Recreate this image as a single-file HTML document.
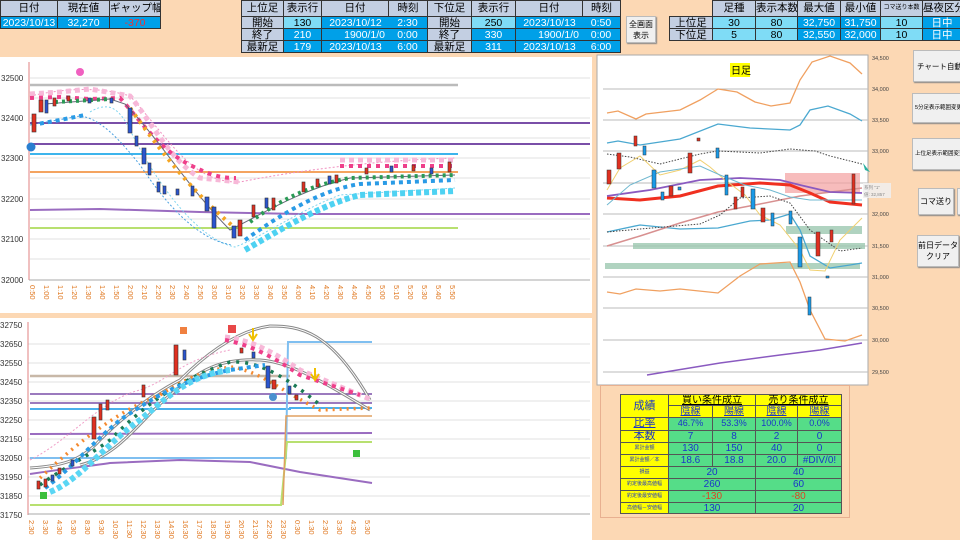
<!DOCTYPE html>
<html><head><meta charset="utf-8"><style>
*{margin:0;padding:0;box-sizing:border-box}
body{width:960px;height:540px;background:#fcd8b4;position:relative;overflow:hidden;font-family:"Liberation Sans","Noto Sans CJK JP",sans-serif;}
.c{position:absolute;font-size:10.5px;text-align:center;line-height:12px;border:1px solid #333;white-space:nowrap;overflow:hidden}
.h{background:#c3cfe2;color:#000}
.b{background:#00a0e8;color:#fff}
.l{background:#7fdcf6;color:#000}
.btn{position:absolute;background:#f0f0f0;border:1px solid #bbb;box-shadow:1px 1px 1px #888;font-size:8px;display:flex;align-items:center;justify-content:center;text-align:center;line-height:13px;white-space:nowrap;overflow:hidden}
.t{position:absolute;font-size:10px;text-align:center;border:1px solid #555;line-height:11px;white-space:nowrap;overflow:hidden}
.y{background:#ffff00;color:#1a35c8}
.g{background:#55dd88;color:#1a35c8}
svg text{font-family:"Liberation Sans",sans-serif}
</style></head><body>
<div class="c h" style="left:0;top:0;width:58px;height:17px;line-height:15px">日付</div>
<div class="c h" style="left:57px;top:0;width:53px;height:17px;line-height:15px">現在値</div>
<div class="c h" style="left:109px;top:0;width:52px;height:17px;line-height:15px">ギャップ幅</div>
<div class="c b" style="left:0;top:16px;width:58px;height:13px">2023/10/13</div>
<div class="c b" style="left:57px;top:16px;width:53px;height:13px">32,270</div>
<div class="c b" style="left:109px;top:16px;width:52px;height:13px;color:#e33">-370</div>
<div class="c h" style="left:241px;top:0;width:43px;height:17px;line-height:15px">上位足</div>
<div class="c h" style="left:283px;top:0;width:39px;height:17px;line-height:15px">表示行</div>
<div class="c h" style="left:321px;top:0;width:68px;height:17px;line-height:15px">日付</div>
<div class="c h" style="left:388px;top:0;width:40px;height:17px;line-height:15px">時刻</div>
<div class="c h" style="left:427px;top:0;width:45px;height:17px;line-height:15px">下位足</div>
<div class="c h" style="left:471px;top:0;width:45px;height:17px;line-height:15px">表示行</div>
<div class="c h" style="left:515px;top:0;width:68px;height:17px;line-height:15px">日付</div>
<div class="c h" style="left:582px;top:0;width:39px;height:17px;line-height:15px">時刻</div>
<div class="c h" style="left:241px;top:16px;width:43px;height:13px">開始</div>
<div class="c l" style="left:283px;top:16px;width:39px;height:13px">130</div>
<div class="c b" style="left:321px;top:16px;width:68px;height:13px;border-right:0">2023/10/12</div>
<div class="c b" style="left:388px;top:16px;width:40px;height:13px;border-left:0">2:30</div>
<div class="c h" style="left:427px;top:16px;width:45px;height:13px">開始</div>
<div class="c l" style="left:471px;top:16px;width:45px;height:13px">250</div>
<div class="c b" style="left:515px;top:16px;width:68px;height:13px;border-right:0">2023/10/13</div>
<div class="c b" style="left:582px;top:16px;width:39px;height:13px;border-left:0">0:50</div>
<div class="c h" style="left:241px;top:28px;width:43px;height:13px">終了</div>
<div class="c b" style="left:283px;top:28px;width:39px;height:13px">210</div>
<div class="c b" style="left:321px;top:28px;width:68px;height:13px;border-right:0;text-align:right;padding-right:4px">1900/1/0</div>
<div class="c b" style="left:388px;top:28px;width:40px;height:13px;border-left:0">0:00</div>
<div class="c h" style="left:427px;top:28px;width:45px;height:13px">終了</div>
<div class="c b" style="left:471px;top:28px;width:45px;height:13px">330</div>
<div class="c b" style="left:515px;top:28px;width:68px;height:13px;border-right:0;text-align:right;padding-right:4px">1900/1/0</div>
<div class="c b" style="left:582px;top:28px;width:39px;height:13px;border-left:0">0:00</div>
<div class="c h" style="left:241px;top:40px;width:43px;height:13px">最新足</div>
<div class="c b" style="left:283px;top:40px;width:39px;height:13px">179</div>
<div class="c b" style="left:321px;top:40px;width:68px;height:13px;border-right:0">2023/10/13</div>
<div class="c b" style="left:388px;top:40px;width:40px;height:13px;border-left:0">6:00</div>
<div class="c h" style="left:427px;top:40px;width:45px;height:13px">最新足</div>
<div class="c b" style="left:471px;top:40px;width:45px;height:13px">311</div>
<div class="c b" style="left:515px;top:40px;width:68px;height:13px;border-right:0">2023/10/13</div>
<div class="c b" style="left:582px;top:40px;width:39px;height:13px;border-left:0">6:00</div>
<div class="btn" style="left:626px;top:16px;width:30px;height:27px;font-size:8px;line-height:11px;white-space:normal">全画面<br>表示</div>
<div class="c h" style="left:712px;top:0;width:44px;height:17px;line-height:15px">足種</div>
<div class="c h" style="left:755px;top:0;width:43px;height:17px;line-height:15px">表示本数</div>
<div class="c h" style="left:797px;top:0;width:44px;height:17px;line-height:15px">最大値</div>
<div class="c h" style="left:840px;top:0;width:41px;height:17px;line-height:15px">最小値</div>
<div class="c h" style="left:880px;top:0;width:43px;height:17px;line-height:15px;font-size:6px">コマ送り本数</div>
<div class="c h" style="left:922px;top:0;width:40px;height:17px;line-height:15px">昼夜区分</div>
<div class="c h" style="left:669px;top:16px;width:44px;height:13px">上位足</div>
<div class="c h" style="left:669px;top:28px;width:44px;height:13px">下位足</div>
<div class="c l" style="left:712px;top:16px;width:44px;height:13px">30</div>
<div class="c l" style="left:712px;top:28px;width:44px;height:13px">5</div>
<div class="c l" style="left:755px;top:16px;width:43px;height:13px">80</div>
<div class="c l" style="left:755px;top:28px;width:43px;height:13px">80</div>
<div class="c b" style="left:797px;top:16px;width:44px;height:13px">32,750</div>
<div class="c b" style="left:797px;top:28px;width:44px;height:13px">32,550</div>
<div class="c b" style="left:840px;top:16px;width:41px;height:13px">31,750</div>
<div class="c b" style="left:840px;top:28px;width:41px;height:13px">32,000</div>
<div class="c l" style="left:880px;top:16px;width:43px;height:13px">10</div>
<div class="c l" style="left:880px;top:28px;width:43px;height:13px">10</div>
<div class="c b" style="left:922px;top:16px;width:40px;height:13px">日中</div>
<div class="c b" style="left:922px;top:28px;width:40px;height:13px">日中</div>

<svg style="position:absolute;left:0;top:56px" width="592" height="484" viewBox="0 56 592 484">
<rect x="0" y="57" width="592" height="256" fill="#fff"/>
<rect x="0" y="318" width="592" height="222" fill="#fff"/>
<g stroke="#e2e2e2" stroke-width="1">
<line x1="30" y1="98" x2="590" y2="98"/><line x1="30" y1="138" x2="590" y2="138"/><line x1="30" y1="178" x2="590" y2="178"/><line x1="30" y1="219" x2="590" y2="219"/><line x1="30" y1="259" x2="590" y2="259"/>
<line x1="30" y1="78" x2="590" y2="78"/><line x1="30" y1="118" x2="590" y2="118"/><line x1="30" y1="158" x2="590" y2="158"/><line x1="30" y1="199" x2="590" y2="199"/><line x1="30" y1="239" x2="590" y2="239"/>
</g>
<line x1="29" y1="62" x2="29" y2="280" stroke="#e08080"/>
<line x1="29" y1="280" x2="590" y2="280" stroke="#aaa"/>
<g font-size="8" fill="#333"><text x="1" y="81">32500</text><text x="1" y="121">32400</text><text x="1" y="161">32300</text><text x="1" y="202">32200</text><text x="1" y="242">32100</text><text x="1" y="283">32000</text></g>
<line x1="30" y1="85" x2="458" y2="85" stroke="#bbb" stroke-width="2.5"/>
<line x1="30" y1="123" x2="590" y2="123" stroke="#7a4fa8" stroke-width="2"/>
<line x1="30" y1="144" x2="590" y2="144" stroke="#7a4fa8" stroke-width="2"/>
<line x1="30" y1="154" x2="458" y2="154" stroke="#3cb4ec" stroke-width="2"/>
<line x1="30" y1="172" x2="458" y2="172" stroke="#f4a460" stroke-width="2"/>
<path d="M30 210 L100 209 L200 212 L300 214 L590 214" stroke="#9a6cc0" stroke-width="2" fill="none"/>
<line x1="30" y1="228" x2="458" y2="228" stroke="#b8e070" stroke-width="2"/>
<path d="M30 96 C80 85 110 90 130 96 C170 140 190 180 235 182 L240 182 C300 170 380 160 455 158" stroke="#f090c0" stroke-dasharray="2 2" fill="none"/>
<path d="M90 112 C110 100 120 110 130 130 C160 190 200 240 235 247 C260 238 300 210 340 195 L455 188" stroke="#7fd4ee" stroke-dasharray="2 2" fill="none"/>
<path d="M30 125 L80 116 C100 118 120 140 140 165 C170 210 200 240 232 245" stroke="#4aa0e0" stroke-dasharray="2 2" fill="none"/>
<path d="M30 94 L60 92 L90 89 L130 96 C150 120 170 160 200 178 C220 180 230 181 240 182" stroke="#f7b8d8" stroke-width="5" stroke-dasharray="5 4" fill="none"/>
<path d="M30 98 L60 97 L90 99 L120 98 C140 120 160 150 190 165 C210 175 220 178 236 178" stroke="#ee3f8a" stroke-width="4" stroke-dasharray="4 5" fill="none"/>
<path d="M340 160 L455 160" stroke="#f7b8d8" stroke-width="5" stroke-dasharray="5 4" fill="none"/>
<path d="M340 166 L455 166" stroke="#ee3f8a" stroke-width="4" stroke-dasharray="4 5" fill="none"/>
<path d="M32 125 L60 120 L85 115" stroke="#2a9be6" stroke-width="4" stroke-dasharray="4 4" fill="none"/>
<path d="M245 250 C280 230 320 205 360 195 L455 191" stroke="#4ed2f2" stroke-width="6" stroke-dasharray="5 3" fill="none"/>
<path d="M245 240 C280 215 320 190 360 184 L455 180" stroke="#2a9be6" stroke-width="4" stroke-dasharray="4 4" fill="none"/>
<path d="M45 104 L110 99 L125 104 C160 140 190 190 230 230 C260 215 300 190 350 178 L455 175" stroke="#667" stroke-width="1" fill="none"/>
<path d="M55 102 L110 99" stroke="#2a9a55" stroke-width="4" stroke-dasharray="3 4" fill="none"/>
<path d="M250 222 C280 200 310 185 350 178 L455 175" stroke="#2a9a55" stroke-width="4" stroke-dasharray="3 4" fill="none"/>
<path d="M130 108 C160 150 190 190 235 228" stroke="#f5a623" stroke-width="4" stroke-dasharray="3 5" fill="none"/>
<g fill="#e03020" stroke="#333" stroke-width=".6">
<rect x="32" y="114" width="4" height="18"/><rect x="39" y="100" width="4" height="12"/><rect x="53" y="98" width="3" height="8"/><rect x="67" y="96" width="3" height="5"/><rect x="238" y="220" width="4" height="16"/><rect x="252" y="205" width="3" height="12"/><rect x="272" y="198" width="3" height="12"/><rect x="302" y="182" width="3" height="10"/><rect x="316" y="179" width="3" height="8"/><rect x="335" y="175" width="3" height="8"/><rect x="365" y="168" width="3" height="6"/><rect x="412" y="165" width="3" height="6"/><rect x="448" y="162" width="3" height="10"/>
</g>
<g fill="#2a55d0" stroke="#333" stroke-width=".6">
<rect x="45" y="100" width="3" height="13"/><rect x="88" y="98" width="3" height="5"/><rect x="110" y="98" width="3" height="5"/><rect x="128" y="108" width="4" height="25"/><rect x="135" y="136" width="3" height="10"/><rect x="142" y="148" width="4" height="16"/><rect x="148" y="163" width="3" height="12"/><rect x="157" y="182" width="3" height="10"/><rect x="163" y="186" width="3" height="8"/><rect x="176" y="189" width="3" height="6"/><rect x="191" y="186" width="3" height="10"/><rect x="205" y="197" width="4" height="14"/><rect x="212" y="207" width="4" height="21"/><rect x="232" y="226" width="4" height="12"/><rect x="265" y="198" width="3" height="10"/><rect x="328" y="176" width="3" height="8"/><rect x="390" y="166" width="3" height="6"/><rect x="430" y="168" width="3" height="6"/>
</g>
<circle cx="80" cy="72" r="4" fill="#f060c0"/><circle cx="31" cy="147" r="4.5" fill="#2a7fd0"/>
<rect x="0" y="313" width="592" height="5" fill="#fcd8b4"/>
<g font-size="7.5" fill="#e07820">
<g transform="translate(30 285) rotate(90)"><text>0:50</text></g><g transform="translate(44 285) rotate(90)"><text>1:00</text></g><g transform="translate(58 285) rotate(90)"><text>1:10</text></g><g transform="translate(72 285) rotate(90)"><text>1:20</text></g><g transform="translate(86 285) rotate(90)"><text>1:30</text></g><g transform="translate(100 285) rotate(90)"><text>1:40</text></g><g transform="translate(114 285) rotate(90)"><text>1:50</text></g><g transform="translate(128 285) rotate(90)"><text>2:00</text></g><g transform="translate(142 285) rotate(90)"><text>2:10</text></g><g transform="translate(156 285) rotate(90)"><text>2:20</text></g><g transform="translate(170 285) rotate(90)"><text>2:30</text></g><g transform="translate(184 285) rotate(90)"><text>2:40</text></g><g transform="translate(198 285) rotate(90)"><text>2:50</text></g><g transform="translate(212 285) rotate(90)"><text>3:00</text></g><g transform="translate(226 285) rotate(90)"><text>3:10</text></g><g transform="translate(240 285) rotate(90)"><text>3:20</text></g><g transform="translate(254 285) rotate(90)"><text>3:30</text></g><g transform="translate(268 285) rotate(90)"><text>3:40</text></g><g transform="translate(282 285) rotate(90)"><text>3:50</text></g><g transform="translate(296 285) rotate(90)"><text>4:00</text></g><g transform="translate(310 285) rotate(90)"><text>4:10</text></g><g transform="translate(324 285) rotate(90)"><text>4:20</text></g><g transform="translate(338 285) rotate(90)"><text>4:30</text></g><g transform="translate(352 285) rotate(90)"><text>4:40</text></g><g transform="translate(366 285) rotate(90)"><text>4:50</text></g><g transform="translate(380 285) rotate(90)"><text>5:00</text></g><g transform="translate(394 285) rotate(90)"><text>5:10</text></g><g transform="translate(408 285) rotate(90)"><text>5:20</text></g><g transform="translate(422 285) rotate(90)"><text>5:30</text></g><g transform="translate(436 285) rotate(90)"><text>5:40</text></g><g transform="translate(450 285) rotate(90)"><text>5:50</text></g>
</g>
<g stroke="#e2e2e2"><line x1="28" y1="344" x2="590" y2="344"/><line x1="28" y1="363" x2="590" y2="363"/><line x1="28" y1="382" x2="590" y2="382"/><line x1="28" y1="401" x2="590" y2="401"/><line x1="28" y1="420" x2="590" y2="420"/><line x1="28" y1="439" x2="590" y2="439"/><line x1="28" y1="458" x2="590" y2="458"/><line x1="28" y1="477" x2="590" y2="477"/><line x1="28" y1="496" x2="590" y2="496"/></g>
<line x1="28" y1="322" x2="28" y2="515" stroke="#e08080"/><line x1="28" y1="514" x2="590" y2="514" stroke="#aaa"/>
<g font-size="8" fill="#333"><text x="0" y="328">32750</text><text x="0" y="347">32650</text><text x="0" y="366">32550</text><text x="0" y="385">32450</text><text x="0" y="404">32350</text><text x="0" y="423">32250</text><text x="0" y="442">32150</text><text x="0" y="461">32050</text><text x="0" y="480">31950</text><text x="0" y="499">31850</text><text x="0" y="518">31750</text></g>
<line x1="30" y1="376" x2="290" y2="376" stroke="#c8b8a8" stroke-width="2.5"/>
<line x1="30" y1="394" x2="372" y2="394" stroke="#7a4fa8" stroke-width="1.5"/>
<line x1="30" y1="403" x2="372" y2="403" stroke="#7a4fa8" stroke-width="1.5"/>
<path d="M30 409 L290 409 L290 408 L372 408" stroke="#4ab0ec" stroke-width="2" fill="none"/>
<path d="M30 434 L372 433" stroke="#9a6cc0" stroke-width="2" fill="none"/>
<path d="M30 458 L280 458 L286 458 L288 342 L372 342" stroke="#7fbff0" stroke-width="2" fill="none"/>
<path d="M30 474 C70 468 90 466 110 463 L180 460 L250 462 L300 472 L372 483" stroke="#9a6cc0" stroke-width="2" fill="none"/>
<path d="M30 505 L281 505 L287 442 L372 442" stroke="#b8e070" stroke-width="2" fill="none"/>
<path d="M283 505 L286 416 L372 416" stroke="#e0a060" stroke-width="1.5" fill="none"/>
<path d="M30 468 C60 466 80 462 100 440 C130 410 160 390 180 380 C210 350 240 330 270 326 C300 326 330 330 370 400" stroke="#888" stroke-width="3" fill="none"/>
<path d="M30 468 C60 466 80 462 100 440 C130 410 160 390 180 380 C210 350 240 330 270 326 C300 326 330 330 370 400" stroke="#fff" stroke-width="1" fill="none"/>
<path d="M80 465 C120 455 140 420 170 395 C200 370 220 358 260 360 C290 362 320 380 370 410" stroke="#888" stroke-width="3" fill="none"/>
<path d="M80 465 C120 455 140 420 170 395 C200 370 220 358 260 360 C290 362 320 380 370 410" stroke="#fff" stroke-width="1" fill="none"/>
<path d="M30 460 C70 440 100 400 140 390 C170 380 180 360 230 350" stroke="#f0a0c8" stroke-dasharray="2 2" fill="none"/>
<path d="M40 478 C80 440 120 410 160 395 C190 375 215 368 235 367 L250 372 C270 380 290 395 320 410 L370 408" stroke="#f48a30" stroke-width="3.5" stroke-dasharray="2 5" fill="none"/>
<path d="M40 485 C60 470 90 455 110 440 C150 400 180 380 230 362 C260 360 290 380 320 405" stroke="#1a7a55" stroke-width="3.5" stroke-dasharray="3 6" fill="none"/>
<path d="M45 488 C70 470 90 445 120 420 C150 400 180 380 230 370 L265 365" stroke="#2a9be6" stroke-width="4" stroke-dasharray="4 4" fill="none"/>
<path d="M50 492 C80 480 110 440 140 420 C170 395 190 375 230 370" stroke="#5ad6f4" stroke-width="6" stroke-dasharray="5 3" fill="none"/>
<path d="M225 337 C250 340 270 350 300 370 L372 400" stroke="#f7b8d8" stroke-width="5" stroke-dasharray="5 4" fill="none"/>
<path d="M225 340 C250 345 270 355 300 375 L360 395" stroke="#ee3f8a" stroke-width="4" stroke-dasharray="4 5" fill="none"/>
<g fill="#e03020" stroke="#333" stroke-width=".6"><rect x="37" y="481" width="3" height="8"/><rect x="44" y="479" width="3" height="8"/><rect x="58" y="468" width="3" height="6"/><rect x="92" y="417" width="4" height="22"/><rect x="99" y="404" width="3" height="16"/><rect x="106" y="400" width="3" height="10"/><rect x="142" y="385" width="3" height="12"/><rect x="174" y="345" width="4" height="30"/><rect x="240" y="348" width="3" height="5"/><rect x="272" y="380" width="4" height="9"/><rect x="295" y="395" width="3" height="5"/></g>
<g fill="#2a55d0" stroke="#333" stroke-width=".6"><rect x="51" y="475" width="3" height="6"/><rect x="71" y="460" width="3" height="6"/><rect x="183" y="350" width="3" height="10"/><rect x="252" y="352" width="3" height="6"/><rect x="266" y="366" width="4" height="22"/><rect x="288" y="386" width="3" height="8"/></g>
<rect x="180" y="327" width="7" height="7" fill="#f08040"/><rect x="228" y="325" width="8" height="8" fill="#e84848"/><rect x="40" y="492" width="7" height="7" fill="#3cbf3c"/><rect x="353" y="450" width="7" height="7" fill="#3cbf3c"/>
<circle cx="273" cy="397" r="4" fill="#4a90d0"/>
<path d="M253 328 L253 338 M249 334 L253 340 L257 334" stroke="#f0c000" stroke-width="2" fill="none"/>
<path d="M315 368 L315 378 M311 374 L315 380 L319 374" stroke="#f0c000" stroke-width="2" fill="none"/>
<g font-size="7.5" fill="#e07820">
<g transform="translate(29 520) rotate(90)"><text>2:30</text></g><g transform="translate(43 520) rotate(90)"><text>3:30</text></g><g transform="translate(57 520) rotate(90)"><text>4:30</text></g><g transform="translate(71 520) rotate(90)"><text>5:30</text></g><g transform="translate(85 520) rotate(90)"><text>8:30</text></g><g transform="translate(99 520) rotate(90)"><text>9:30</text></g><g transform="translate(113 520) rotate(90)"><text>10:30</text></g><g transform="translate(127 520) rotate(90)"><text>11:30</text></g><g transform="translate(141 520) rotate(90)"><text>12:30</text></g><g transform="translate(155 520) rotate(90)"><text>13:30</text></g><g transform="translate(169 520) rotate(90)"><text>14:30</text></g><g transform="translate(183 520) rotate(90)"><text>16:30</text></g><g transform="translate(197 520) rotate(90)"><text>17:30</text></g><g transform="translate(211 520) rotate(90)"><text>18:30</text></g><g transform="translate(225 520) rotate(90)"><text>19:30</text></g><g transform="translate(239 520) rotate(90)"><text>20:30</text></g><g transform="translate(253 520) rotate(90)"><text>21:30</text></g><g transform="translate(267 520) rotate(90)"><text>22:30</text></g><g transform="translate(281 520) rotate(90)"><text>23:30</text></g><g transform="translate(295 520) rotate(90)"><text>0:30</text></g><g transform="translate(309 520) rotate(90)"><text>1:30</text></g><g transform="translate(323 520) rotate(90)"><text>2:30</text></g><g transform="translate(337 520) rotate(90)"><text>3:30</text></g><g transform="translate(351 520) rotate(90)"><text>4:30</text></g><g transform="translate(365 520) rotate(90)"><text>5:30</text></g>
</g>
</svg>

<svg style="position:absolute;left:596px;top:54px" width="300" height="334" viewBox="596 54 300 334">
<rect x="597" y="55" width="271" height="330" fill="#fff" stroke="#aaa"/>
<g stroke="#bbb"><line x1="603" y1="89" x2="868" y2="89"/><line x1="603" y1="120" x2="868" y2="120"/><line x1="603" y1="151" x2="868" y2="151"/><line x1="603" y1="183" x2="868" y2="183"/><line x1="603" y1="214" x2="868" y2="214"/><line x1="603" y1="246" x2="868" y2="246"/><line x1="603" y1="277" x2="868" y2="277"/><line x1="603" y1="308" x2="868" y2="308"/><line x1="603" y1="340" x2="868" y2="340"/><line x1="603" y1="372" x2="868" y2="372"/></g>
<g font-size="5.5" fill="#444"><text x="872" y="60">34,500</text><text x="872" y="91">34,000</text><text x="872" y="122">33,500</text><text x="872" y="153">33,000</text><text x="872" y="216">32,000</text><text x="872" y="248">31,500</text><text x="872" y="279">31,000</text><text x="872" y="310">30,500</text><text x="872" y="342">30,000</text><text x="872" y="374">29,500</text></g>
<rect x="730" y="63" width="20" height="14" fill="#ffff00"/><text x="731" y="74" font-size="10" fill="#000">日足</text>
<rect x="785" y="173" width="75" height="20" fill="#f4a0a0" opacity=".7"/>
<rect x="786" y="226" width="76" height="8" fill="#9cc8b0" opacity=".8"/>
<rect x="633" y="243" width="232" height="6" fill="#9cc8b0" opacity=".8"/>
<rect x="605" y="263" width="255" height="6" fill="#9cc8b0" opacity=".8"/>
<path d="M607 113 L618 111 L636 119 L646 114 L680 110 L700 100 L718 89 L737 92 L755 102 L771 106 L790 103 L800 80 L812 62 L830 56 L850 63 L862 74" stroke="#f0a060" stroke-width="1.3" fill="none"/>
<path d="M607 143 L618 141 L640 145 L680 139 L718 124 L750 128 L790 130 L800 125 L810 110 L828 106 L850 114 L862 121" stroke="#4aa8d0" stroke-width="1.3" fill="none"/>
<path d="M607 232 L640 225 L680 229 L718 228 L750 221 L770 220 L790 214 L800 230 L810 256 L830 268 L850 265 L862 263" stroke="#4aa8d0" stroke-width="1.3" fill="none"/>
<path d="M607 292 L620 294 L636 289 L660 291 L680 289 L718 293 L740 276 L760 264 L775 263 L790 262 L800 282 L810 310 L825 339 L845 341 L862 335" stroke="#f0a060" stroke-width="1.3" fill="none"/>
<path d="M647 375 L720 363 L780 355 L820 350 L862 343" stroke="#8a5ac0" stroke-width="1.5" fill="none"/>
<path d="M607 246 L640 236 L680 223 L718 212 L760 204 L800 196 L862 188" stroke="#d89090" stroke-width="1.5" fill="none"/>
<path d="M607 198 L640 200 L680 196 L718 186 L760 183 L790 185 L810 193 L830 202 L862 205" stroke="#f03020" stroke-width="3" fill="none"/>
<path d="M607 196 L650 190 L700 180 L740 178 L780 180 L800 185 L830 192 L862 193" stroke="#8a5ac0" stroke-width="1.8" fill="none"/>
<path d="M607 154 L630 157 L660 164 L700 154 L718 151 L760 153 L790 149 L815 151 L830 156 L862 164" stroke="#444" stroke-dasharray="1.5 1.5" fill="none"/>
<path d="M607 232 L640 229 L700 224 L720 215 L740 198 L770 196 L790 203 L810 230 L840 251 L862 248" stroke="#444" stroke-dasharray="1.5 1.5" fill="none"/>
<path d="M607 190 L620 168 L640 156 L660 175 L680 170 L700 160 L710 167 L725 180 L745 195 L760 215 L780 225 L800 250 L810 270 L825 271 L840 240 L862 218" stroke="#f0d070" stroke-width="1" fill="none"/>
<path d="M607 205 L630 185 L660 172 L700 166 L720 175 L745 185 L770 190 L790 197 L810 200 L840 200 L862 200" stroke="#70b8d0" stroke-width="1" fill="none"/>
<g fill="#e03020" stroke="#333" stroke-width=".5"><rect x="607" y="170" width="4" height="14"/><rect x="617" y="153" width="4" height="16"/><rect x="634" y="136" width="3" height="10"/><rect x="669" y="186" width="4" height="10"/><rect x="697" y="138" width="3" height="3"/><rect x="688" y="153" width="4" height="20"/><rect x="734" y="197" width="3" height="12"/><rect x="741" y="187" width="3" height="10"/><rect x="761" y="208" width="4" height="14"/><rect x="816" y="232" width="4" height="24"/><rect x="830" y="230" width="3" height="12"/><rect x="852" y="174" width="3" height="30"/></g>
<g fill="#1a9ae8" stroke="#333" stroke-width=".5"><rect x="643" y="146" width="3" height="9"/><rect x="652" y="170" width="4" height="18"/><rect x="661" y="192" width="3" height="8"/><rect x="678" y="187" width="3" height="3"/><rect x="716" y="148" width="3" height="10"/><rect x="725" y="175" width="3" height="20"/><rect x="751" y="189" width="4" height="20"/><rect x="771" y="213" width="3" height="13"/><rect x="789" y="211" width="3" height="13"/><rect x="798" y="237" width="4" height="30"/><rect x="808" y="297" width="3" height="18"/><rect x="826" y="276" width="3" height="2"/></g>
<path d="M863 163 L870 172 L865 170 Z" fill="#2ab0a0"/>
<rect x="863" y="183" width="28" height="15" fill="#f0f0f0" opacity=".85"/>
<text x="864" y="189" font-size="4.5" fill="#888">系列 &quot;1&quot;</text><text x="864" y="196" font-size="4.5" fill="#888">値: 32,857</text>
</svg>

<div class="btn" style="left:913px;top:50px;width:50px;height:32px;font-size:7.5px;justify-content:flex-start;padding-left:3px">チャート自動調整</div>
<div class="btn" style="left:912px;top:93px;width:50px;height:30px;font-size:5.5px;justify-content:flex-start;padding-left:2px">5分足表示範囲変更</div>
<div class="btn" style="left:912px;top:138px;width:50px;height:32px;font-size:5.5px;justify-content:flex-start;padding-left:2px">上位足表示範囲変更</div>
<div class="btn" style="left:918px;top:188px;width:36px;height:27px;font-size:8px">コマ送り</div>
<div class="btn" style="left:957px;top:188px;width:10px;height:27px"></div>
<div class="btn" style="left:917px;top:235px;width:42px;height:32px;font-size:8px;line-height:11px;white-space:normal">前日データ<br>クリア</div>

<div style="position:absolute;left:600px;top:385px;width:250px;height:133px;border:1px solid #e8b090"></div>
<div class="t y" style="left:620px;top:394px;width:49px;height:24px;line-height:22px;font-size:11px">成績</div>
<div class="t y" style="left:668px;top:394px;width:88px;height:12px;color:#000;text-decoration:underline">買い条件成立</div>
<div class="t y" style="left:755px;top:394px;width:87px;height:12px;color:#000;text-decoration:underline">売り条件成立</div>
<div class="t y" style="left:668px;top:405px;width:45px;height:13px;text-decoration:underline">陰線</div>
<div class="t y" style="left:712px;top:405px;width:44px;height:13px;text-decoration:underline">陽線</div>
<div class="t y" style="left:755px;top:405px;width:43px;height:13px;text-decoration:underline">陰線</div>
<div class="t y" style="left:797px;top:405px;width:45px;height:13px;text-decoration:underline">陽線</div>
<div class="t y" style="left:620px;top:417px;width:49px;height:14px;font-size:11px;text-decoration:underline">比率</div>
<div class="t g" style="left:668px;top:417px;width:45px;height:14px;font-size:9px">46.7%</div>
<div class="t g" style="left:712px;top:417px;width:44px;height:14px;font-size:9px">53.3%</div>
<div class="t g" style="left:755px;top:417px;width:43px;height:14px;font-size:9px">100.0%</div>
<div class="t g" style="left:797px;top:417px;width:45px;height:14px;font-size:9px">0.0%</div>
<div class="t y" style="left:620px;top:430px;width:49px;height:13px;font-size:11px">本数</div>
<div class="t g" style="left:668px;top:430px;width:45px;height:13px">7</div>
<div class="t g" style="left:712px;top:430px;width:44px;height:13px">8</div>
<div class="t g" style="left:755px;top:430px;width:43px;height:13px">2</div>
<div class="t g" style="left:797px;top:430px;width:45px;height:13px">0</div>
<div class="t y" style="left:620px;top:442px;width:49px;height:13px;font-size:5px">累計金額</div>
<div class="t g" style="left:668px;top:442px;width:45px;height:13px">130</div>
<div class="t g" style="left:712px;top:442px;width:44px;height:13px">150</div>
<div class="t g" style="left:755px;top:442px;width:43px;height:13px">40</div>
<div class="t g" style="left:797px;top:442px;width:45px;height:13px">0</div>
<div class="t y" style="left:620px;top:454px;width:49px;height:13px;font-size:5px">累計金額／本</div>
<div class="t g" style="left:668px;top:454px;width:45px;height:13px">18.6</div>
<div class="t g" style="left:712px;top:454px;width:44px;height:13px">18.8</div>
<div class="t g" style="left:755px;top:454px;width:43px;height:13px">20.0</div>
<div class="t g" style="left:797px;top:454px;width:45px;height:13px">#DIV/0!</div>
<div class="t y" style="left:620px;top:466px;width:49px;height:13px;font-size:5px">損益</div>
<div class="t g" style="left:668px;top:466px;width:88px;height:13px">20</div>
<div class="t g" style="left:755px;top:466px;width:87px;height:13px">40</div>
<div class="t y" style="left:620px;top:478px;width:49px;height:13px;font-size:5px">約定後最高値幅</div>
<div class="t g" style="left:668px;top:478px;width:88px;height:13px">260</div>
<div class="t g" style="left:755px;top:478px;width:87px;height:13px">60</div>
<div class="t y" style="left:620px;top:490px;width:49px;height:13px;font-size:5px">約定後最安値幅</div>
<div class="t g" style="left:668px;top:490px;width:88px;height:13px;color:#e04020">-130</div>
<div class="t g" style="left:755px;top:490px;width:87px;height:13px;color:#e04020">-80</div>
<div class="t y" style="left:620px;top:502px;width:49px;height:12px;font-size:5px">高値幅－安値幅</div>
<div class="t g" style="left:668px;top:502px;width:88px;height:12px">130</div>
<div class="t g" style="left:755px;top:502px;width:87px;height:12px">20</div>
</body></html>
